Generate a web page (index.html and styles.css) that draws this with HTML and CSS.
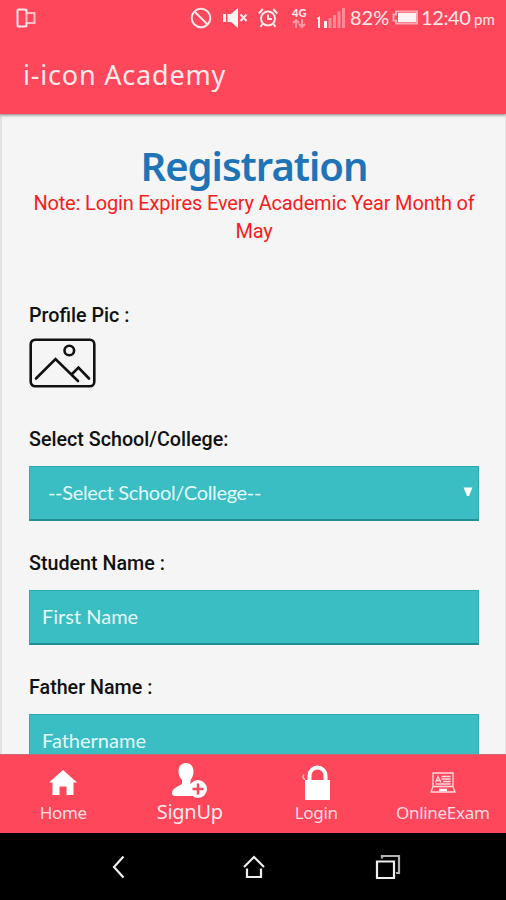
FILE: index.html
```
<!DOCTYPE html>
<html lang="en">
  <head>
    <meta charset="UTF-8" />
    <meta name="viewport" content="width=device-width, initial-scale=1.0" />
    <title>i-icon Academy</title>
    <link rel="stylesheet" href="styles.css">
  </head>
  <body>
    <header class="header">
      <div class="status-bar">
        <svg class="app-icon" width="21" height="22" viewBox="0 0 21 22">
          <path d="M11.500 6.500V3.500a1 1 0 0 0-1-1h-7a1 1 0 0 0-1 1v15a1 1 0 0 0 1 1h7a1 1 0 0 0 1-1v-3" />
          <path d="M11.500 6v10M11.500 6h8v10h-8" opacity=".75" />
        </svg>

        <div class="status-icons">
          <svg width="22" height="22" viewBox="0 0 22 22">
            <circle cx="11" cy="11" r="9.3" />
            <path d="M4.500 4.500l13 13" />
          </svg>
          <svg class="mute" width="26" height="22" viewBox="0 0 26 22">
            <path class="fill" d="M1 7h3v8H1zM5.500 7h3.500l7-6v20l-7-6H5.500z" />
            <path d="M18.500 7.500l6 6.500M24.500 7.500l-6 6.500" />
          </svg>
          <svg class="alarm" width="22" height="22" viewBox="0 0 22 22">
            <circle cx="11" cy="11.500" r="7" />
            <path d="M11 7.500v4.500h4M1.800 6.500l4-4.500M20.200 6.500l-4-4.500M5.500 17l-2 3M16.500 17l2 3" />
          </svg>
          <div class="network">
            <span>4G</span>
            <svg width="14" height="11" viewBox="0 0 14 11">
              <path d="M4 10V2M1 5l3-3 3 3M10 1v8M7 6l3 3 3-3" />
            </svg>
          </div>
          <svg class="signal" width="28" height="22" viewBox="0 0 28 22">
            <path class="fill" d="M0 11l3-2v12H1v-9H0zM7 14h3v7H7z" />
            <path class="fill" opacity=".4" d="M11.500 11h3v10h-3zM16 8h3v13h-3zM20.500 4.500h3V21h-3zM25 1h3v20h-3z" />
          </svg>
          <span class="battery-text">82%</span>
          <svg class="battery" width="26" height="16" viewBox="0 0 26 16">
            <path d="M4 1.500h21v12H4v-3H1.500v-6H4z" opacity=".6" />
            <path class="fill" d="M6 3h18v9H6z" />
          </svg>
          <span class="time">12:40</span>
          <span class="pm">pm</span>
        </div>
      </div>
      <h1>i-icon Academy</h1>
    </header>

    <main class="container">
      <h2>Registration</h2>
      <p class="note">Note: Login Expires Every Academic Year Month of May</p>

      <form>
        <div class="field profile">
          <label>Profile Pic :</label>
          <svg width="67" height="50" viewBox="0 0 67 50">
            <rect x="1.700" y="1.700" width="63.600" height="46.600" rx="4.500" />
            <circle cx="40.300" cy="12.500" r="4.800" />
            <path d="M7 40.500L26.500 21 49 43M42.500 36.500l7-7L60 40.500" />
          </svg>
        </div>

        <div class="field">
          <label>Select School/College:</label>
          <div class="input select">
            <span>--Select School/College--</span>
            <svg width="10" height="10" viewBox="0 0 10 10">
              <path d="M.5.5h9L6 9H4z" />
            </svg>
          </div>
        </div>

        <div class="field">
          <label for="first-name">Student Name :</label>
          <input class="input" id="first-name" type="text" placeholder="First Name" />
        </div>

        <div class="field">
          <label for="father-name">Father Name :</label>
          <input class="input" id="father-name" type="text" placeholder="Fathername" />
        </div>
      </form>
    </main>

    <nav class="tabs">
      <a class="tab">
        <svg class="home-icon" width="28" height="25" viewBox="0 0 28 25">
          <path d="M14 0l14 12.500h-3.500V25h-7v-8.500h-7V25h-7V12.500H0z" />
        </svg>
        <span>Home</span>
      </a>
      <a class="tab active">
        <svg class="signup-icon" width="36" height="35" viewBox="0 0 36 35">
          <path d="M14 0c5 0 7.500 4 7.500 8.500 0 4-1.500 6.500-3 8.500v4l2 1c-3 3-3 8 0 11H3c-2 0-3-1-3-3 0-4 5-6.500 10-9v-4C8 15 6.500 12 6.500 8.500 6.500 4 9 0 14 0z" />
          <circle cx="26" cy="26" r="9" />
          <path class="plus" d="M26 20.500v11M20.500 26h11" />
        </svg>
        <span>SignUp</span>
      </a>
      <a class="tab">
        <svg class="lock-icon" width="30" height="35" viewBox="0 0 30 35">
          <path d="M4 15h25v20H4z" />
          <path class="shackle" d="M8.500 16V10.500a8 8 0 0 1 16 0V16" />
          <path class="thin" d="M3 9.500c-2 2-1 4 1 5" />
        </svg>
        <span>Login</span>
      </a>
      <a class="tab">
        <svg class="exam-icon" width="26" height="21" viewBox="0 0 26 21">
          <path d="M3 1h20v13.500H3zM3 14.500L1 20h24l-2-5.500M5.500 10.500l2.500-6 3 6M6.500 8.500h4M11.500 4.500h9M11.500 7h9M13 9.500h7.500M5.500 12h15" />
          <path class="base" d="M9 18h8" />
        </svg>
        <span>OnlineExam</span>
      </a>
    </nav>

    <footer class="android-bar">
      <svg width="14" height="24" viewBox="0 0 14 24">
        <path d="M12.500 1.500L3 12l9.500 10.500" />
      </svg>
      <svg class="android-home" width="22" height="24" viewBox="0 0 22 24">
        <path d="M1 12L11 2l10 10M4 13.500V22h14v-8.500" />
      </svg>
      <svg width="26" height="26" viewBox="0 0 26 26">
        <path d="M2 7.500h17V24H2z" />
        <path d="M7 4.500V2h17v17h-3" opacity=".75" />
      </svg>
    </footer>
  </body>
</html>
```
FILE: styles.css
```
* {
  box-sizing: border-box;
  margin: 0;
  padding: 0;
}

body {
  display: flex;
  flex-direction: column;
  height: 100vh;
  overflow: hidden;
  background-color: #f5f5f5;
  font-family: Roboto, sans-serif;
}

svg {
  display: block;
  flex: none;
}

.header {
  flex: none;
  height: 114px;
  background-color: #ff475c;
  color: #ffe9eb;
  box-shadow: 0 1px 3px rgba(0, 0, 0, 0.5);
  z-index: 1;
}

.status-bar {
  display: flex;
  justify-content: space-between;
  align-items: center;
  height: 36px;
  padding: 0 11px 0 15px;
}

.status-bar svg {
  fill: none;
  stroke: #ffe9eb;
  stroke-width: 2;
}

.status-bar .fill {
  fill: #fff3f4;
  stroke: none;
}

.status-icons {
  display: flex;
  align-items: center;
  height: 36px;
  font-family: Lato, sans-serif;
  white-space: nowrap;
}

.mute {
  margin-left: 10px;
}

.alarm {
  margin-left: 9px;
}

.network {
  width: 15px;
  margin-left: 13px;
  font-size: 11px;
  font-weight: 900;
  line-height: 9px;
}

.network svg {
  opacity: 0.5;
  margin-top: 1px;
}

.signal {
  margin-left: 10px;
}

.battery-text {
  width: 38px;
  height: 36px;
  margin-left: 5px;
  font-size: 20px;
  line-height: 34px;
}

.battery {
  margin-left: 4px;
}

.time {
  width: 49px;
  height: 36px;
  margin-left: 3px;
  font-size: 20px;
  line-height: 34px;
  letter-spacing: -0.4px;
}

.pm {
  width: 21px;
  margin-left: 4px;
  padding-top: 2px;
  font-size: 15px;
}

h1 {
  padding-left: 23px;
  font-family: "Noto Sans", sans-serif;
  font-size: 27px;
  font-weight: 400;
  line-height: 77px;
  letter-spacing: 0.8px;
}

.container {
  flex: 1;
  min-height: 0;
  padding: 32px 26px 0 27px;
  overflow: hidden;
  border-left: 2px solid #e3e3e3;
  border-right: 1px solid #e3e3e3;
}

h2 {
  color: #1e74b6;
  font-family: "Noto Sans", sans-serif;
  font-size: 40px;
  font-weight: 600;
  line-height: 40px;
  letter-spacing: -1px;
  text-align: center;
}

.note {
  padding-top: 3px;
  color: #f91c1c;
  font-size: 20px;
  line-height: 28px;
  letter-spacing: -0.16px;
  text-align: center;
}

form {
  padding-top: 57px;
}

.field {
  height: 124px;
}

label {
  display: block;
  height: 27px;
  color: #111;
  font-size: 19.7px;
  font-weight: 500;
  line-height: 27px;
}

.profile svg {
  margin-top: 9px;
  fill: none;
  stroke: #111;
  stroke-width: 2.6;
  stroke-linecap: round;
}

.input {
  display: block;
  width: 100%;
  height: 55px;
  margin-top: 13px;
  padding: 0 12px 3px;
  background-color: #3abdc3;
  border: 1px solid #2aabb0;
  border-bottom: 2px solid #218e93;
  color: #e4fbfb;
  font-family: Lato, sans-serif;
  font-size: 20px;
}

.input::placeholder {
  color: #e4fbfb;
}

.select {
  display: flex;
  align-items: center;
  justify-content: space-between;
  padding: 0 5px 2px 18px;
  letter-spacing: -0.33px;
}

.select svg {
  fill: #fff;
}

.tabs {
  display: grid;
  flex: none;
  grid-template-columns: repeat(4, 1fr);
  height: 79px;
  background-color: #ff475c;
  border-top: 1px solid #c96a72;
}

.tab {
  display: flex;
  flex-direction: column;
  align-items: center;
  justify-content: flex-end;
  padding-bottom: 8px;
  color: #ffdde0;
  font-family: "Noto Sans", sans-serif;
  font-size: 17px;
  line-height: 24px;
  letter-spacing: -0.3px;
}

.tab svg {
  fill: #fff;
}

.home-icon {
  margin-bottom: 6px;
}

.signup-icon {
  margin-bottom: 2px;
}

.lock-icon {
  margin-bottom: 1px;
}

.exam-icon {
  margin-bottom: 8px;
}

.active {
  padding-bottom: 9px;
  color: #ffe9eb;
  font-size: 20px;
}

.plus {
  stroke: #ff475c;
  stroke-width: 2.5;
}

.tab .shackle {
  fill: none;
  stroke: #fff;
  stroke-width: 4;
}

.tab .thin {
  fill: none;
  stroke: #ffc4ca;
  stroke-width: 1.5;
}

.tab .exam-icon {
  fill: none;
  stroke: #ffd9dd;
  stroke-width: 1.3;
}

.exam-icon .base {
  stroke: #fff;
  stroke-width: 2.5;
}

.android-bar {
  display: flex;
  flex: none;
  align-items: center;
  justify-content: space-between;
  height: 67px;
  padding: 0 105px 0 111px;
  background-color: #000;
}

.android-bar svg {
  fill: none;
  stroke: #eee;
  stroke-width: 2.2;
}

.android-bar .android-home {
  margin-left: 7px;
}
```
